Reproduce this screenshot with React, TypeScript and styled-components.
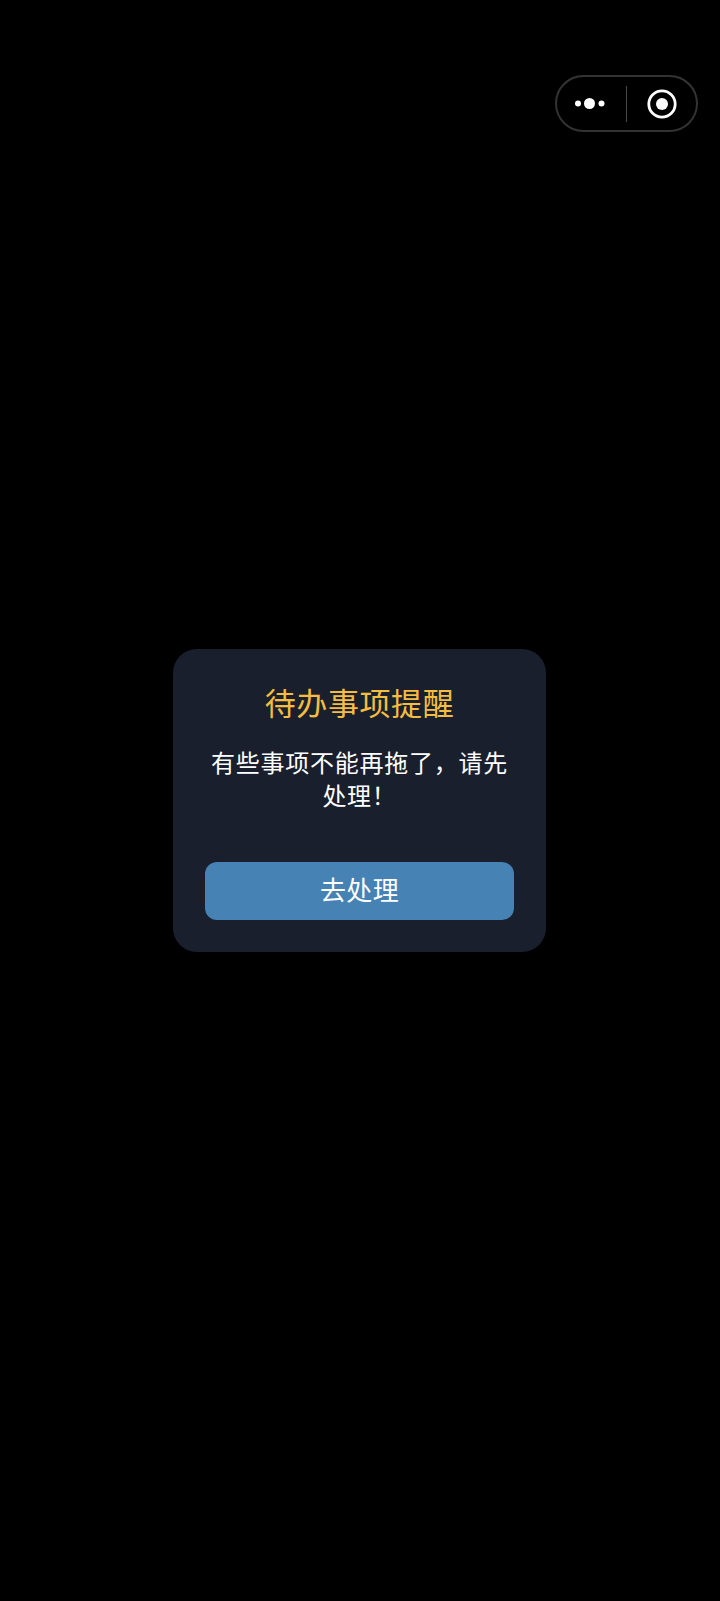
import styled, { createGlobalStyle } from "styled-components";

const GlobalStyle = createGlobalStyle`
  html, body {
    margin: 0;
    padding: 0;
    background: #000;
  }
  body {
    font-family: "Noto Sans CJK SC", "Liberation Sans", sans-serif;
  }
`;

const App = () => {
  return (
    <Page>
      <GlobalStyle />
      <Capsule>
        <MoreButton aria-label="more">
          <svg width="30" height="11" viewBox="0 0 30 11">
            <circle cx="3" cy="5.5" r="3" fill="#fff" />
            <circle cx="14.5" cy="5.5" r="5.5" fill="#fff" />
            <circle cx="26.5" cy="5.5" r="3" fill="#fff" />
          </svg>
        </MoreButton>
        <Divider />
        <CloseButton aria-label="close">
          <svg width="30" height="30" viewBox="0 0 30 30">
            <circle cx="15" cy="15" r="13.2" fill="none" stroke="#fff" strokeWidth="2.8" />
            <circle cx="15" cy="15" r="6" fill="#fff" />
          </svg>
        </CloseButton>
      </Capsule>
      <Card>
        <Title>待办事项提醒</Title>
        <Message>有些事项不能再拖了，请先处理！</Message>
        <ActionButton>去处理</ActionButton>
      </Card>
    </Page>
  );
};

const Page = styled.div`
  position: relative;
  width: 720px;
  height: 1601px;
  background: #000;
  overflow: hidden;
  display: flex;
  align-items: center;
  justify-content: center;
`;

const Capsule = styled.div`
  position: absolute;
  top: 75px;
  left: 555px;
  width: 143px;
  height: 57px;
  box-sizing: border-box;
  border: 2px solid #333;
  border-radius: 29px;
  display: flex;
  align-items: center;
`;

const MoreButton = styled.div`
  width: 69px;
  box-sizing: border-box;
  padding-right: 3px;
  display: flex;
  justify-content: center;
`;

const Divider = styled.div`
  width: 1px;
  height: 36px;
  background: #4a4a4a;
`;

const CloseButton = styled.div`
  flex: 1;
  display: flex;
  justify-content: center;
`;

const Card = styled.div`
  width: 373px;
  height: 303px;
  margin-right: 1px;
  box-sizing: border-box;
  padding: 31px 32px 32px;
  background: #1a1f2e;
  border-radius: 24px;
  display: flex;
  flex-direction: column;
  align-items: center;
`;

const Title = styled.div`
  font-size: 31px;
  line-height: 44px;
  letter-spacing: 0.6px;
  color: #f4bd3f;
  text-align: center;
`;

const Message = styled.div`
  margin-top: 21px;
  width: 100%;
  font-size: 24px;
  line-height: 33px;
  letter-spacing: 0.75px;
  color: #fff;
  text-align: center;
`;

const ActionButton = styled.button`
  margin-top: auto;
  width: 100%;
  height: 58px;
  padding: 0 0 5px;
  border: none;
  border-radius: 12px;
  background: #4682b4;
  color: #fff;
  font-family: inherit;
  font-size: 26px;
  letter-spacing: 0.4px;
`;

export default App;
